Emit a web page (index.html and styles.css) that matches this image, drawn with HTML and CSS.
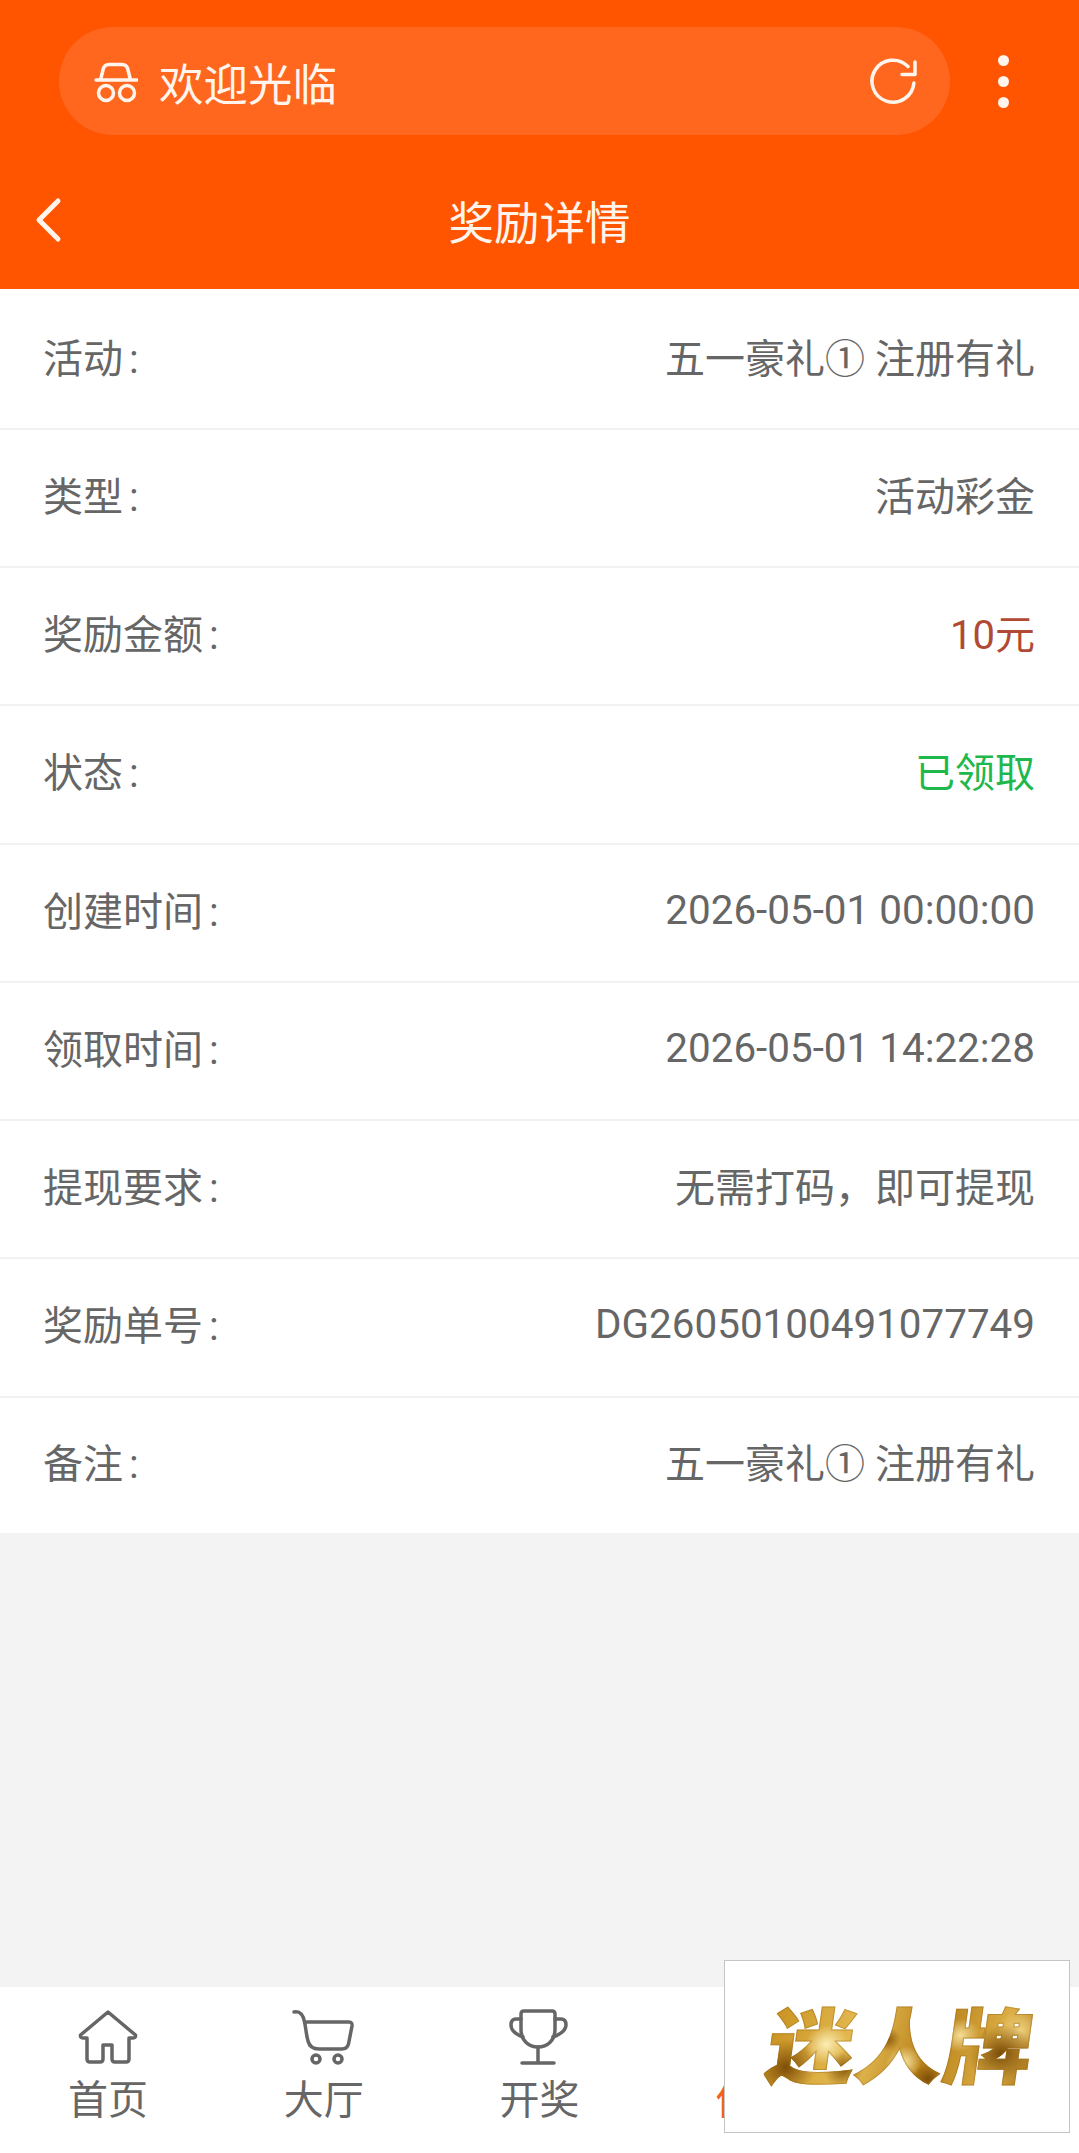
FILE: index.html
```html
<!DOCTYPE html>
<html>
<head>
    <meta charset="utf-8">
    <title>奖励详情</title>
    <link rel="stylesheet" href="styles.css">
</head>
<body>
<div class="page">
    <header class="header">
        <div class="topbar">
            <div class="pill">
                <svg class="hat" width="44" height="44" viewBox="0 0 44 44">
                    <path d="M2 21H43M6.500 21L9 11Q10 5.500 15 5.500H28Q33 5.500 34 11L36.500 21"/>
                    <circle cx="12" cy="34" r="7.500"/>
                    <circle cx="33" cy="34" r="7.500"/>
                </svg>
                <span class="pill-text">欢迎光临</span>
                <svg class="reload" width="50" height="48" viewBox="0 0 50 48">
                    <path d="M44.900 26A21 21 0 1 1 39 9.500"/>
                    <path d="M33 17.500H46V5"/>
                </svg>
            </div>
            <div class="dots"><i></i><i></i><i></i></div>
        </div>
        <div class="titlebar">
            <svg class="back" width="30" height="46" viewBox="0 0 30 46">
                <path d="M24 4L5 23L24 42"/>
            </svg>
            <h1>奖励详情</h1>
        </div>
    </header>

    <main class="main">
        <div class="list">
            <div class="row"><span class="label">活动 :</span><span>五一豪礼① 注册有礼</span></div>
            <div class="row"><span class="label">类型 :</span><span>活动彩金</span></div>
            <div class="row"><span class="label">奖励金额 :</span><span class="red">10元</span></div>
            <div class="row"><span class="label">状态 :</span><span class="green">已领取</span></div>
            <div class="row"><span class="label">创建时间 :</span><span class="num">2026-05-01 00:00:00</span></div>
            <div class="row"><span class="label">领取时间 :</span><span class="num">2026-05-01 14:22:28</span></div>
            <div class="row"><span class="label">提现要求 :</span><span>无需打码，即可提现</span></div>
            <div class="row"><span class="label">奖励单号 :</span><span class="num">DG26050100491077749</span></div>
            <div class="row"><span class="label">备注 :</span><span>五一豪礼① 注册有礼</span></div>
        </div>
    </main>

    <nav class="nav">
        <a class="nav-item">
            <svg width="60" height="60" viewBox="0 0 60 60">
                <path d="M30 4L2.500 27Q2 30 5 30H9V51Q9 54 12 54H22Q25 54 25 51V37H34V51Q34 54 37 54H48Q51 54 51 51V30H55Q58 30 57.500 27Z"/>
            </svg>
            <span>首页</span>
        </a>
        <a class="nav-item">
            <svg width="70" height="60" viewBox="0 0 70 60">
                <path d="M5 4C11 3 14 6 15.500 14H60Q63.500 14 63 18L59.500 36Q58 41 53 41H30Q21 41 19 33C17 26 17 20 15.500 14"/>
                <circle cx="27" cy="51" r="4"/>
                <circle cx="49" cy="51" r="4"/>
            </svg>
            <span>大厅</span>
        </a>
        <a class="nav-item">
            <svg width="70" height="60" viewBox="0 0 70 60">
                <path d="M17 6Q17 3 20 3H48Q51 3 51 6V21C51 33 43 39 34 39C25 39 17 33 17 21Z"/>
                <path d="M17 11H12Q7 11 7 17C7 22 11 26 19 29"/>
                <path d="M51 11H57Q62 11 62 17C62 22 57 26 49 29"/>
                <path d="M34 39V55M18 55H50"/>
            </svg>
            <span>开奖</span>
        </a>
        <a class="nav-item active">
            <svg width="60" height="60" viewBox="0 0 60 60">
                <path d="M8 14H52V48H8Z"/>
            </svg>
            <span>优惠</span>
        </a>
        <a class="nav-item">
            <svg width="60" height="60" viewBox="0 0 60 60">
                <circle cx="30" cy="20" r="12"/>
                <path d="M8 54C10 40 20 36 30 36C40 36 50 40 52 54"/>
            </svg>
            <span>我的</span>
        </a>
    </nav>

    <div class="float-ad">
        <span class="ad-text">迷人牌</span>
    </div>
</div>
</body>
</html>
```

FILE: styles.css
```css
*{
    box-sizing:border-box;
    font-family:Roboto, 'Noto Sans CJK SC', sans-serif;
}
html,body{
    margin:0;
    padding:0;
}
.page{
    position:relative;
    display:flex;
    flex-direction:column;
    width:1079px;
    height:2153px;
    overflow:hidden;
    background:#f3f3f3;
}
.header{
    height:289px;
    padding-top:27px;
    background:#ff5400;
    color:#fff;
}
.topbar{
    display:flex;
    align-items:center;
    height:108px;
    padding-left:59px;
}
.pill{
    display:flex;
    align-items:center;
    width:891px;
    height:108px;
    padding:0 31px 0 35px;
    border-radius:54px;
    background:#ff661e;
}
.pill svg{
    fill:none;
    stroke:#fff5ec;
    stroke-width:3.500;
    stroke-linecap:round;
    stroke-linejoin:round;
}
.pill-text{
    margin-left:21px;
    font-size:44.500px;
    color:#fff5ec;
}
.reload{
    margin-left:auto;
}
.dots{
    display:flex;
    flex-direction:column;
    gap:10px;
    margin-left:48px;
}
.dots i{
    display:block;
    width:11px;
    height:11px;
    border-radius:50%;
    background:#fff5ec;
}
.titlebar{
    position:relative;
    display:flex;
    align-items:center;
    justify-content:center;
    height:154px;
    padding-top:16px;
}
.titlebar h1{
    margin:0;
    font-size:45.500px;
    font-weight:normal;
    color:#fff5ec;
}
.back{
    position:absolute;
    left:34px;
    top:62px;
    fill:none;
    stroke:#fff5ec;
    stroke-width:5;
    stroke-linecap:round;
    stroke-linejoin:round;
}
.main{
    flex:1;
}
.list{
    padding-top:2.500px;
    background:#fff;
}
.row{
    display:flex;
    align-items:center;
    justify-content:space-between;
    height:138.250px;
    padding:0 44px 8px 43px;
    border-bottom:2.500px solid #f2f2f2;
    font-size:40px;
    color:#666;
}
.row:last-child{
    height:135.500px;
    border-bottom:none;
}
.label{
    word-spacing:-4px;
}
.num{
    padding-top:3px;
    font-size:40.400px;
}
.red{
    color:#b14a35;
}
.green{
    color:#1fb84d;
}
.nav{
    display:grid;
    grid-template-columns:repeat(5, 1fr);
    height:166px;
    background:#fff;
}
.nav-item{
    display:flex;
    flex-direction:column;
    align-items:center;
    padding-top:21px;
    font-size:40px;
    line-height:42px;
    color:#666;
}
.nav-item svg{
    margin-bottom:12px;
    fill:none;
    stroke:#666;
    stroke-width:3.500;
    stroke-linecap:round;
    stroke-linejoin:round;
}
.nav-item.active{
    color:#f4611f;
}
.nav-item.active svg{
    stroke:#f4611f;
}
.float-ad{
    position:absolute;
    left:724px;
    top:1960px;
    display:flex;
    align-items:center;
    justify-content:center;
    width:346px;
    height:173px;
    padding:5px 0 0 6px;
    border:1.500px solid #c4c4c4;
    background:#fff;
}
.ad-text{
    transform:skewX(-8deg) scaleX(1.08);
    font-size:82px;
    font-weight:900;
    line-height:92px;
    white-space:nowrap;
    color:transparent;
    -webkit-text-stroke:1px rgba(150,100,20,.4);
    background:
        radial-gradient(circle at 8% 70%, #7d4e08 0, rgba(125,78,8,0) 12%),
        radial-gradient(circle at 22% 45%, #fbeeb5 0, rgba(251,238,181,0) 10%),
        radial-gradient(circle at 30% 72%, #8a5a0c 0, rgba(138,90,12,0) 10%),
        radial-gradient(circle at 45% 40%, #8d5c0d 0, rgba(141,92,13,0) 8%),
        radial-gradient(circle at 52% 65%, #f8e6a4 0, rgba(248,230,164,0) 12%),
        radial-gradient(circle at 62% 82%, #7d4e08 0, rgba(125,78,8,0) 9%),
        radial-gradient(circle at 72% 35%, #f4dd96 0, rgba(244,221,150,0) 9%),
        radial-gradient(circle at 88% 55%, #7a4c08 0, rgba(122,76,8,0) 13%),
        radial-gradient(circle at 94% 30%, #efd27f 0, rgba(239,210,127,0) 9%),
        linear-gradient(100deg, #c8911f, #e6bd55 35%, #b77f18 60%, #dcae45 85%, #a9741a);
    -webkit-background-clip:text;
    background-clip:text;
}
```
